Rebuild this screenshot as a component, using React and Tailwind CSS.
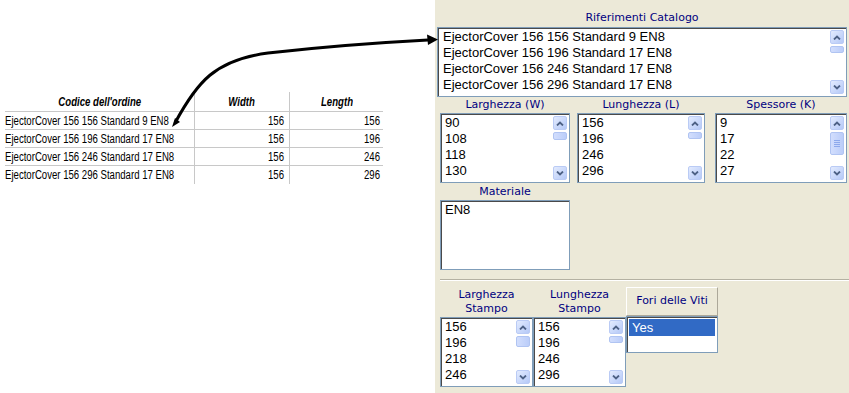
import React from "react";

const LABEL = "font-['DejaVu_Sans',Verdana,sans-serif] text-[11px] text-[#000080] text-center";
const LIST = "font-['Liberation_Sans',Arial,sans-serif] text-[13px] leading-[16px] text-black";
const TBL = "font-['Liberation_Sans',Arial,sans-serif] text-[12px] text-black";

function Chevron({ up }) {
  return (
    <svg width="8" height="5" viewBox="0 0 8 5">
      <path
        d={up ? "M1 4.5 L4 1.5 L7 4.5" : "M1 0.5 L4 3.5 L7 0.5"}
        stroke="#4D6185"
        strokeWidth="1.8"
        fill="none"
      />
    </svg>
  );
}

function SBtn({ up }) {
  return (
    <div className="w-[14px] h-[14px] rounded-[2px] border border-[#BACBF5] bg-linear-to-br from-[#E3EBFE] to-[#B5C9F7] flex items-center justify-center">
      <Chevron up={up} />
    </div>
  );
}

function Thumb({ cls, grip }) {
  return (
    <div
      className={
        "w-[14px] rounded-[2px] border border-[#B0C4F2] bg-linear-to-r from-[#D2DEFD] to-[#BBCDF9] flex flex-col items-center justify-center gap-[1px] " +
        cls
      }
    >
      {grip && (
        <>
          <div className="w-[6px] h-[1px] bg-[#8DA9EC]" />
          <div className="w-[6px] h-[1px] bg-[#8DA9EC]" />
          <div className="w-[6px] h-[1px] bg-[#8DA9EC]" />
          <div className="w-[6px] h-[1px] bg-[#8DA9EC]" />
        </>
      )}
    </div>
  );
}

function Scrollbar({ thumb, grip }) {
  return (
    <div className="w-[14px] h-full flex flex-col justify-between py-[1px]">
      <div className="flex flex-col gap-[2px]">
        <SBtn up />
        <Thumb cls={thumb} grip={grip} />
      </div>
      <SBtn />
    </div>
  );
}

function ListBox({ cls, items, thumb, grip, textPad = "pl-[3px]" }) {
  return (
    <div className={"border border-[#7F9DB9] bg-white " + cls}>
      <div className="h-full border-t border-l border-[#4A4A4A] flex pr-[2px] pb-[1px]">
        <div className={"flex-1 " + LIST + " " + textPad}>
          {items.map((t) => (
            <div key={t} className="h-[16px] whitespace-nowrap">
              {t}
            </div>
          ))}
        </div>
        {thumb && <Scrollbar thumb={thumb} grip={grip} />}
      </div>
    </div>
  );
}

const rows = [
  ["EjectorCover 156 156 Standard 9 EN8", "156", "156"],
  ["EjectorCover 156 196 Standard 17 EN8", "156", "196"],
  ["EjectorCover 156 246 Standard 17 EN8", "156", "246"],
  ["EjectorCover 156 296 Standard 17 EN8", "156", "296"],
];

export default function App() {
  return (
    <div className="relative w-[849px] h-[393px] flex overflow-hidden bg-white">
      {/* left: spreadsheet table */}
      <div className="w-[435px] bg-white pt-[92px] pl-[5px]">
        <div className={"w-[378px] " + TBL}>
          <div className="flex h-[20px] border-b border-[#C8C8C8] font-bold italic">
            <div className="w-[190px] border-r border-[#C8C8C8] flex items-center justify-center">
              <span className="inline-block whitespace-nowrap scale-x-[0.8]">Codice dell'ordine</span>
            </div>
            <div className="w-[95px] border-r border-[#C8C8C8] flex items-center justify-center">
              <span className="inline-block scale-x-[0.8]">Width</span>
            </div>
            <div className="flex-1 flex items-center justify-center">
              <span className="inline-block scale-x-[0.8]">Length</span>
            </div>
          </div>
          {rows.map((r, i) => (
            <div
              key={i}
              className={
                i < 3
                  ? "flex h-[18px] border-b border-[#C8C8C8]"
                  : "flex h-[18px]"
              }
            >
              <div className="w-[190px] border-r border-[#C8C8C8] flex items-center overflow-hidden">
                <span className="inline-block whitespace-nowrap origin-left scale-x-[0.8]">{r[0]}</span>
              </div>
              <div className="w-[95px] border-r border-[#C8C8C8] flex items-center justify-end pr-[5px]">
                <span className="inline-block origin-right scale-x-[0.8]">{r[1]}</span>
              </div>
              <div className="flex-1 flex items-center justify-end pr-[3px]">
                <span className="inline-block origin-right scale-x-[0.8]">{r[2]}</span>
              </div>
            </div>
          ))}
        </div>
      </div>

      {/* right: form panel */}
      <div className="flex-1 bg-[#ECE9D8] pl-[2px] pt-[11px] flex flex-col">
        <div className={"w-[410px] h-[13px] leading-[13px] mb-[3px] " + LABEL}>
          Riferimenti Catalogo
        </div>
        <ListBox
          cls="w-[410px] h-[70px]"
          items={rows.map((r) => r[0])}
          thumb="h-[7px]"
          textPad="pl-[4px]"
        />

        <div className="ml-[3px] flex h-[16px] leading-[16px]">
          <div className={"w-[130px] " + LABEL}>Larghezza (W)</div>
          <div className={"w-[128px] ml-[7px] " + LABEL}>Lunghezza (L)</div>
          <div className={"w-[132px] ml-[10px] " + LABEL}>Spessore (K)</div>
        </div>
        <div className="ml-[3px] flex h-[70px]">
          <ListBox cls="w-[130px] h-[70px]" items={["90", "108", "118", "130"]} thumb="h-[8px]" />
          <ListBox
            cls="w-[128px] h-[70px] ml-[7px]"
            items={["156", "196", "246", "296"]}
            thumb="h-[7px]"
          />
          <ListBox
            cls="w-[132px] h-[70px] ml-[10px]"
            items={["9", "17", "22", "27"]}
            thumb="h-[23px]"
            grip
          />
        </div>

        <div className={"ml-[3px] w-[130px] h-[17px] leading-[17px] " + LABEL}>Materiale</div>
        <ListBox cls="ml-[3px] w-[130px] h-[70px]" items={["EN8"]} />

        <div className="ml-[3px] mt-[9px] border-t border-[#B4B1A2] border-b border-b-white" />

        <div className="ml-[3px] mt-[6px] flex">
          <div className="w-[93px] flex flex-col">
            <div className={"h-[30px] pt-[1px] leading-[14px] " + LABEL}>
              Larghezza
              <br />
              Stampo
            </div>
            <ListBox
              cls="w-[93px] h-[70px]"
              items={["156", "196", "218", "246"]}
              thumb="h-[11px]"
            />
          </div>
          <div className="w-[93px] flex flex-col">
            <div className={"h-[30px] pt-[1px] leading-[14px] " + LABEL}>
              Lunghezza
              <br />
              Stampo
            </div>
            <ListBox
              cls="w-[93px] h-[70px]"
              items={["156", "196", "246", "296"]}
              thumb="h-[7px]"
            />
          </div>
          <div className="w-[92px] flex flex-col">
            <div
              className={
                "h-[29px] border border-t-white border-l-white border-b-[#ACA899] border-r-[#ACA899] flex items-center justify-center " +
                LABEL
              }
            >
              Fori delle Viti
            </div>
            <div className="w-[92px] h-[37px] border border-[#7F9DB9] bg-white">
              <div className="h-full border-t border-l border-[#4A4A4A] pr-[2px] pt-[1px] pl-[1px]">
                <div
                  className={
                    "h-[17px] bg-[#316AC5] pl-[3px] " +
                    "font-['Liberation_Sans',Arial,sans-serif] text-[13px] leading-[17px] text-white"
                  }
                >
                  Yes
                </div>
              </div>
            </div>
          </div>
        </div>
      </div>

      {/* connector arrow drawn over the page */}
      <svg
        className="absolute left-0 top-0 pointer-events-none"
        width="849"
        height="393"
        viewBox="0 0 849 393"
      >
        <path
          d="M175 123 C 197 82, 215 60, 268 53 C 330 46, 390 42, 428 40"
          stroke="#000"
          strokeWidth="3"
          fill="none"
        />
        <polygon points="438,39.5 427,34.5 428,45" fill="#000" />
        <polygon points="172,127 175,118 180,122" fill="#000" />
      </svg>
    </div>
  );
}
